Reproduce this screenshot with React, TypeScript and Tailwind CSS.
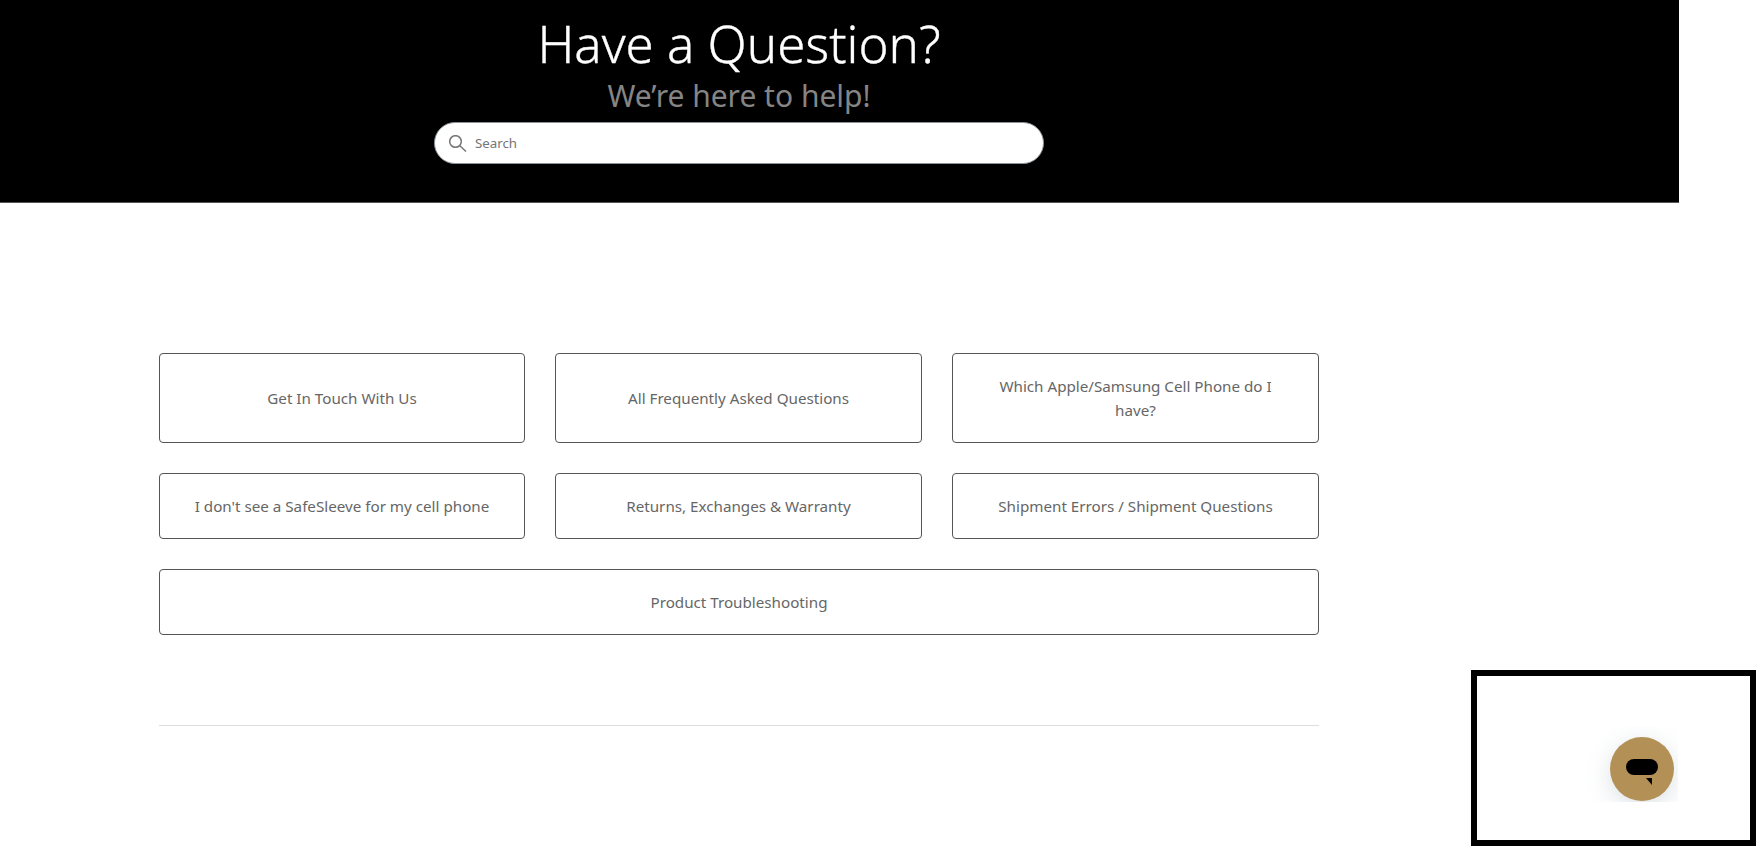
const TOP_LINKS = [
  { label: "Get In Touch With Us", tall: true },
  { label: "All Frequently Asked Questions", tall: true },
  { label: "Which Apple/Samsung Cell Phone do I have?", tall: true },
  { label: "I don't see a SafeSleeve for my cell phone", tall: false },
  { label: "Returns, Exchanges & Warranty", tall: false },
  { label: "Shipment Errors / Shipment Questions", tall: false },
];

function LinkCard({ label, className }: { label: string; className: string }) {
  return (
    <a className={`flex items-center justify-center rounded-[4px] border border-[#555555] px-8 text-center text-[15.2px] leading-[24px] text-[#666666] ${className}`}>
      {label}
    </a>
  );
}

function ChatWidget() {
  return (
    <div className="fixed right-0 bottom-[1px] flex h-[176px] w-[285px] justify-end border-[6px] border-black bg-white">
      <div className="mt-[51px] mr-[72px] flex h-[75px] w-[96px] justify-end overflow-hidden pr-[4px]">
        <button className="mt-[10px] h-[64px] w-[64px] shrink-0 rounded-full bg-[#b39156] shadow-[0_6px_24px_rgba(90,120,130,0.22)]">
          <svg width="64" height="64" viewBox="0 0 64 64">
            <rect x="16" y="22" width="32" height="16" rx="8" fill="#000000" />
            <path d="M36 41h6v7z" fill="#000000" />
          </svg>
        </button>
      </div>
    </div>
  );
}

export default function App() {
  return (
    <div className="h-[847px] w-full overflow-hidden bg-white font-['Noto_Sans',sans-serif]">
      <header className="h-[203px] w-[1679px] border-b border-[#555555] bg-black">
        <div className="flex w-[1478px] flex-col items-center pt-[9px]">
          <h1 className="mt-[-2px] text-[51px] leading-[72px] font-light text-white [-webkit-text-stroke:0.35px_#ffffff]">Have a Question?</h1>
          <p className="mt-[-3px] text-[30px] leading-[40px] text-[#858585]">We’re here to help!</p>
          <div className="mt-[6px] flex h-[42px] w-[610px] items-center gap-[8px] rounded-full border border-[#8b949b] bg-white pl-[14px]">
            <svg width="18" height="17" viewBox="0 0 18 17" fill="none" stroke="#757575" strokeWidth="1.5">
              <circle cx="6.5" cy="6.5" r="5.8" />
              <path d="M10.8 10.8L17 16.5" />
            </svg>
            <span className="mt-[2px] text-[13.3px] text-[#757575]">Search</span>
          </div>
        </div>
      </header>

      <main className="ml-[159px] w-[1160px] pt-[150px]">
        <div className="grid grid-cols-[366px_367px_367px] gap-x-[30px] gap-y-[30px]">
          {TOP_LINKS.map((item) => (
            <LinkCard key={item.label} label={item.label} className={item.tall ? "h-[90px]" : "h-[66px]"} />
          ))}
          <LinkCard label="Product Troubleshooting" className="col-span-3 h-[66px]" />
        </div>
        <hr className="mt-[90px] border-[#dedede]" />
      </main>

      <ChatWidget />
    </div>
  );
}
